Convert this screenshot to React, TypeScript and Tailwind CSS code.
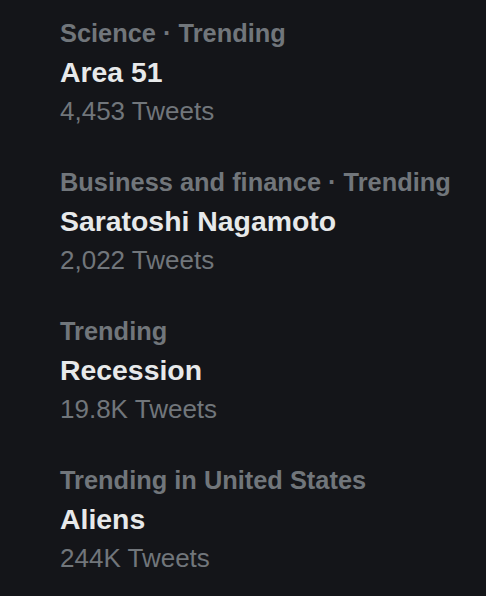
export default function App() {
  const items = [
    { cat: "Science · Trending", title: "Area 51", count: "4,453 Tweets" },
    { cat: "Business and finance · Trending", title: "Saratoshi Nagamoto", count: "2,022 Tweets" },
    { cat: "Trending", title: "Recession", count: "19.8K Tweets" },
    { cat: "Trending in United States", title: "Aliens", count: "244K Tweets" },
  ];
  return (
    <div className="w-[486px] h-[596px] bg-[#141519] pl-[60px] pt-[14px] flex flex-col gap-[32px] overflow-hidden" style={{ fontFamily: '"Liberation Sans", Arial, sans-serif' }}>
      {items.map((it) => (
        <div key={it.title} className="flex flex-col">
          <div className="h-[39px] leading-[39px] text-[25.4px] font-bold text-[#71767b] whitespace-nowrap">{it.cat}</div>
          <div className="h-[39px] leading-[39px] text-[28.4px] font-bold text-[#e7e9ea] whitespace-nowrap">{it.title}</div>
          <div className="h-[39px] leading-[39px] text-[26px] text-[#71767b] whitespace-nowrap">{it.count}</div>
        </div>
      ))}
    </div>
  );
}
